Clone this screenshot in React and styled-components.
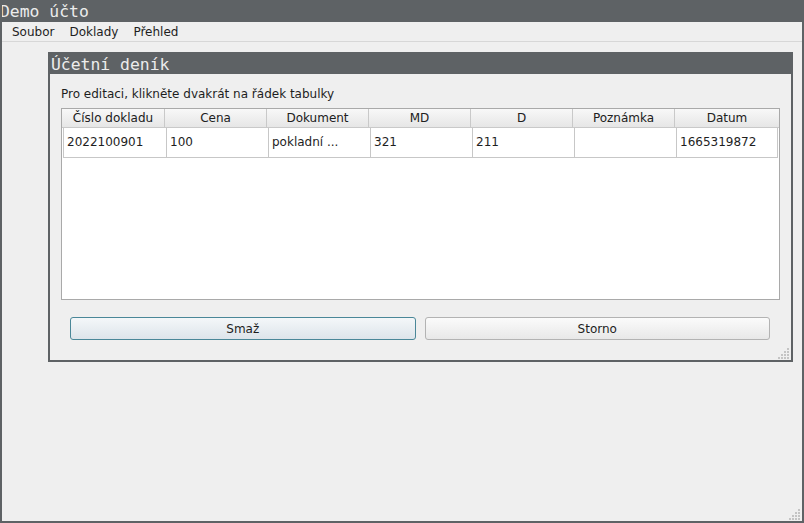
import React from "react";
import styled, { createGlobalStyle } from "styled-components";

const GlobalStyle = createGlobalStyle`
  html, body {
    margin: 0;
    padding: 0;
    background: #efefef;
    font-family: "DejaVu Sans", "Liberation Sans", sans-serif;
    font-size: 12px;
    color: #1e1e1e;
  }
`;

const columns = ["Číslo dokladu", "Cena", "Dokument", "MD", "D", "Poznámka", "Datum"];
const rows = [["2022100901", "100", "pokladní ...", "321", "211", "", "1665319872"]];

const Grip = ({ className }) => (
  <svg className={className} width="12" height="12" viewBox="0 0 12 12">
    {[[9, 1], [9, 4], [6, 4], [9, 7], [6, 7], [3, 7], [9, 10], [6, 10], [3, 10], [0, 10]].map(([x, y]) => (
      <rect key={x + "-" + y} x={x} y={y} width="2" height="2" fill="#c4c4c4" />
    ))}
  </svg>
);

const App = () => {
  return (
    <>
      <GlobalStyle />
      <MainWindow>
        <TitleBar>Demo účto</TitleBar>
        <MenuBar>
          <MenuItem>Soubor</MenuItem>
          <MenuItem>Doklady</MenuItem>
          <MenuItem>Přehled</MenuItem>
        </MenuBar>
        <Workspace>
          <SubWindow>
            <TitleBar $sub>Účetní deník</TitleBar>
            <Content>
              <Hint>Pro editaci, klikněte dvakrát na řádek tabulky</Hint>
              <Table>
                <HeaderRow>
                  {columns.map((c) => (
                    <HeaderCell key={c}>{c}</HeaderCell>
                  ))}
                </HeaderRow>
                {rows.map((r, i) => (
                  <Row key={i}>
                    {r.map((v, j) => (
                      <Cell key={j}>{v}</Cell>
                    ))}
                  </Row>
                ))}
              </Table>
              <ButtonRow>
                <Button $primary>Smaž</Button>
                <Button>Storno</Button>
              </ButtonRow>
            </Content>
            <SubGrip />
          </SubWindow>
        </Workspace>
        <MainGrip />
      </MainWindow>
    </>
  );
};

export default App;

const MainWindow = styled.div`
  position: relative;
  width: 804px;
  height: 523px;
  box-sizing: border-box;
  border-left: 2px solid #5e6265;
  border-right: 2px solid #5e6265;
  border-bottom: 2px solid #5e6265;
  background: #efefef;
  display: flex;
  flex-direction: column;
  overflow: hidden;
`;

const TitleBar = styled.div`
  height: ${(p) => (p.$sub ? "21px" : "22px")};
  line-height: ${(p) => (p.$sub ? "23px" : "23px")};
  background: #5e6265;
  color: #ececec;
  font-family: "DejaVu Sans Mono", "Liberation Mono", monospace;
  font-size: 16.4px;
  padding-left: ${(p) => (p.$sub ? "1px" : "0")};
  margin-left: ${(p) => (p.$sub ? "0" : "-2px")};
  margin-right: ${(p) => (p.$sub ? "0" : "-2px")};
  white-space: nowrap;
  flex-shrink: 0;
`;

const MenuBar = styled.div`
  height: 19px;
  display: flex;
  align-items: center;
  padding-left: 3px;
  border-bottom: 1px solid #d7d7d7;
  flex-shrink: 0;
`;

const MenuItem = styled.div`
  padding: 1px 7px 0;
  margin-right: 1px;
  font-size: 12px;
  line-height: 18px;
`;

const Workspace = styled.div`
  flex: 1;
  padding: 10px 0 0 46px;
`;

const SubWindow = styled.div`
  position: relative;
  width: 745px;
  height: 310px;
  box-sizing: border-box;
  border: 2px solid #5e6265;
  border-top: 1px solid #5e6265;
  background: #efefef;
  display: flex;
  flex-direction: column;
`;

const Content = styled.div`
  flex: 1;
  display: flex;
  flex-direction: column;
  padding: 13px 11px 0 11px;
`;

const Hint = styled.div`
  font-size: 12px;
  line-height: 15px;
  margin-bottom: 6px;
`;

const Table = styled.div`
  height: 192px;
  box-sizing: border-box;
  border: 1px solid #a9a9a9;
  background: #ffffff;
  display: flex;
  flex-direction: column;
`;

const HeaderRow = styled.div`
  display: grid;
  grid-template-columns: 103px repeat(5, 102px) 1fr;
  height: 18px;
  border-bottom: 1px solid #c9c9c9;
  background: linear-gradient(#f8f8f8, #e6e6e6);
`;

const HeaderCell = styled.div`
  text-align: center;
  line-height: 18px;
  font-size: 12px;
  color: #202020;
  border-right: 1px solid #c9c9c9;
  &:last-child {
    border-right: none;
  }
`;

const Row = styled.div`
  display: grid;
  grid-template-columns: 103px repeat(5, 102px) 1fr;
  height: 29px;
  margin: 0 1px;
  border-left: 1px solid #c7c7c7;
  border-bottom: 1px solid #c7c7c7;
  & > div:first-child {
    padding-left: 3px;
  }
`;

const Cell = styled.div`
  border-right: 1px solid #c7c7c7;
  padding-left: 3px;
  line-height: 29px;
  font-size: 12px;
  color: #1e1e1e;
  white-space: nowrap;
  overflow: hidden;
`;

const ButtonRow = styled.div`
  display: flex;
  gap: 9px;
  padding: 17px 10px 0 9px;
`;

const Button = styled.button`
  flex: 1;
  height: 23px;
  box-sizing: border-box;
  border-radius: 3px;
  font-family: "DejaVu Sans", "Liberation Sans", sans-serif;
  font-size: 12px;
  color: #1e1e1e;
  border: 1px solid ${(p) => (p.$primary ? "#4a8798" : "#b3b3b3")};
  background: ${(p) =>
    p.$primary ? "linear-gradient(#f4f7f9, #dde4ea)" : "linear-gradient(#fbfbfb, #e8e8e8)"};
  padding: 0;
`;

const SubGrip = styled(Grip)`
  position: absolute;
  right: 1px;
  bottom: 1px;
`;

const MainGrip = styled(Grip)`
  position: absolute;
  right: 1px;
  bottom: 1px;
`;
